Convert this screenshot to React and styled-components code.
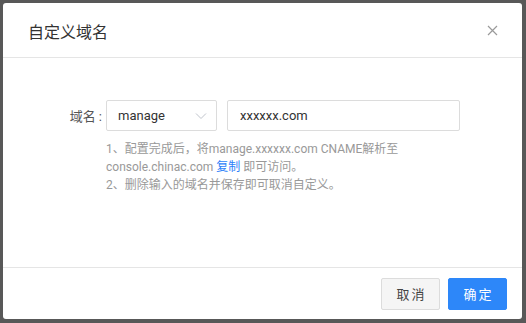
import styled, { createGlobalStyle } from 'styled-components';

const Global = createGlobalStyle`
  html, body { margin: 0; padding: 0; }
  body {
    background: #585858;
    font-family: Roboto, "Noto Sans CJK SC", sans-serif;
  }
`;

export default function App() {
  return (
    <>
      <Global />
      <Overlay>
        <Dialog>
          <Header>
            <Title>自定义域名</Title>
            <Close aria-label="close">
              <svg width="11" height="11" viewBox="0 0 11 11">
                <path d="M1 1L10 10M10 1L1 10" stroke="#9a9a9a" strokeWidth="1.2" fill="none" />
              </svg>
            </Close>
          </Header>
          <Body>
            <Row>
              <Label>域名 :</Label>
              <Select>
                <span>manage</span>
                <svg width="12" height="8" viewBox="0 0 12 8">
                  <path d="M1 1.5L6 6.5L11 1.5" stroke="#c0c4cc" strokeWidth="1" fill="none" />
                </svg>
              </Select>
              <Input defaultValue="xxxxxx.com" />
            </Row>
            <Help>
              <div>1、配置完成后，将manage.xxxxxx.com CNAME解析至</div>
              <div>console.chinac.com <Link>复制</Link> 即可访问。</div>
              <div>2、删除输入的域名并保存即可取消自定义。</div>
            </Help>
          </Body>
          <Footer>
            <Button>取消</Button>
            <Button primary>确定</Button>
          </Footer>
        </Dialog>
      </Overlay>
    </>
  );
}

const Overlay = styled.div`
  width: 526px;
  height: 323px;
  padding: 3px 0 0 3px;
  box-sizing: border-box;
`;

const Dialog = styled.div`
  width: 519px;
  height: 316px;
  background: #fff;
  border-radius: 3px;
  display: flex;
  flex-direction: column;
`;

const Header = styled.div`
  height: 54px;
  border-bottom: 1px solid #e5e5e5;
  display: flex;
  align-items: center;
  justify-content: space-between;
  padding: 0 24px 0 25px;
`;

const Title = styled.div`
  font-size: 16px;
  color: #333;
  padding-top: 1px;
`;

const Close = styled.div`
  display: flex;
  align-items: center;
  padding-top: 1px;
`;

const Body = styled.div`
  flex: 1;
  padding: 42px 0 0 54px;
`;

const Row = styled.div`
  display: flex;
  align-items: center;
`;

const Label = styled.div`
  width: 45px;
  font-size: 13px;
  color: #555;
  padding-right: 4px;
  text-align: right;
`;

const Select = styled.div`
  width: 111px;
  height: 31px;
  box-sizing: border-box;
  border: 1px solid #dcdcdc;
  border-radius: 2px;
  display: flex;
  align-items: center;
  justify-content: space-between;
  padding: 0 9px 0 11px;
  font-size: 13px;
  color: #333;
  margin-right: 10px;
`;

const Input = styled.input`
  width: 233px;
  height: 31px;
  box-sizing: border-box;
  border: 1px solid #dcdcdc;
  border-radius: 2px;
  padding: 0 12px;
  font-family: inherit;
  font-size: 13px;
  color: #333;
  outline: none;
`;

const Help = styled.div`
  margin: 9px 0 0 49px;
  font-size: 12px;
  line-height: 18px;
  color: #999;
`;

const Link = styled.span`
  color: #2d7ff9;
`;

const Footer = styled.div`
  height: 52px;
  box-sizing: border-box;
  border-top: 1px solid #e5e5e5;
  display: flex;
  align-items: center;
  justify-content: flex-end;
  gap: 8px;
  padding: 0 15px 0 0;
`;

const Button = styled.button`
  width: 59px;
  height: 32px;
  box-sizing: border-box;
  border-radius: 2px;
  border: 1px solid ${p => (p.primary ? '#2d87f9' : '#dcdcdc')};
  background: ${p => (p.primary ? '#2d87f9' : '#f5f5f5')};
  color: ${p => (p.primary ? '#fff' : '#444')};
  font-family: Roboto, "Noto Sans CJK SC", sans-serif;
  font-size: 13px;
  letter-spacing: 2px;
  padding: 0 0 0 2px;
`;
